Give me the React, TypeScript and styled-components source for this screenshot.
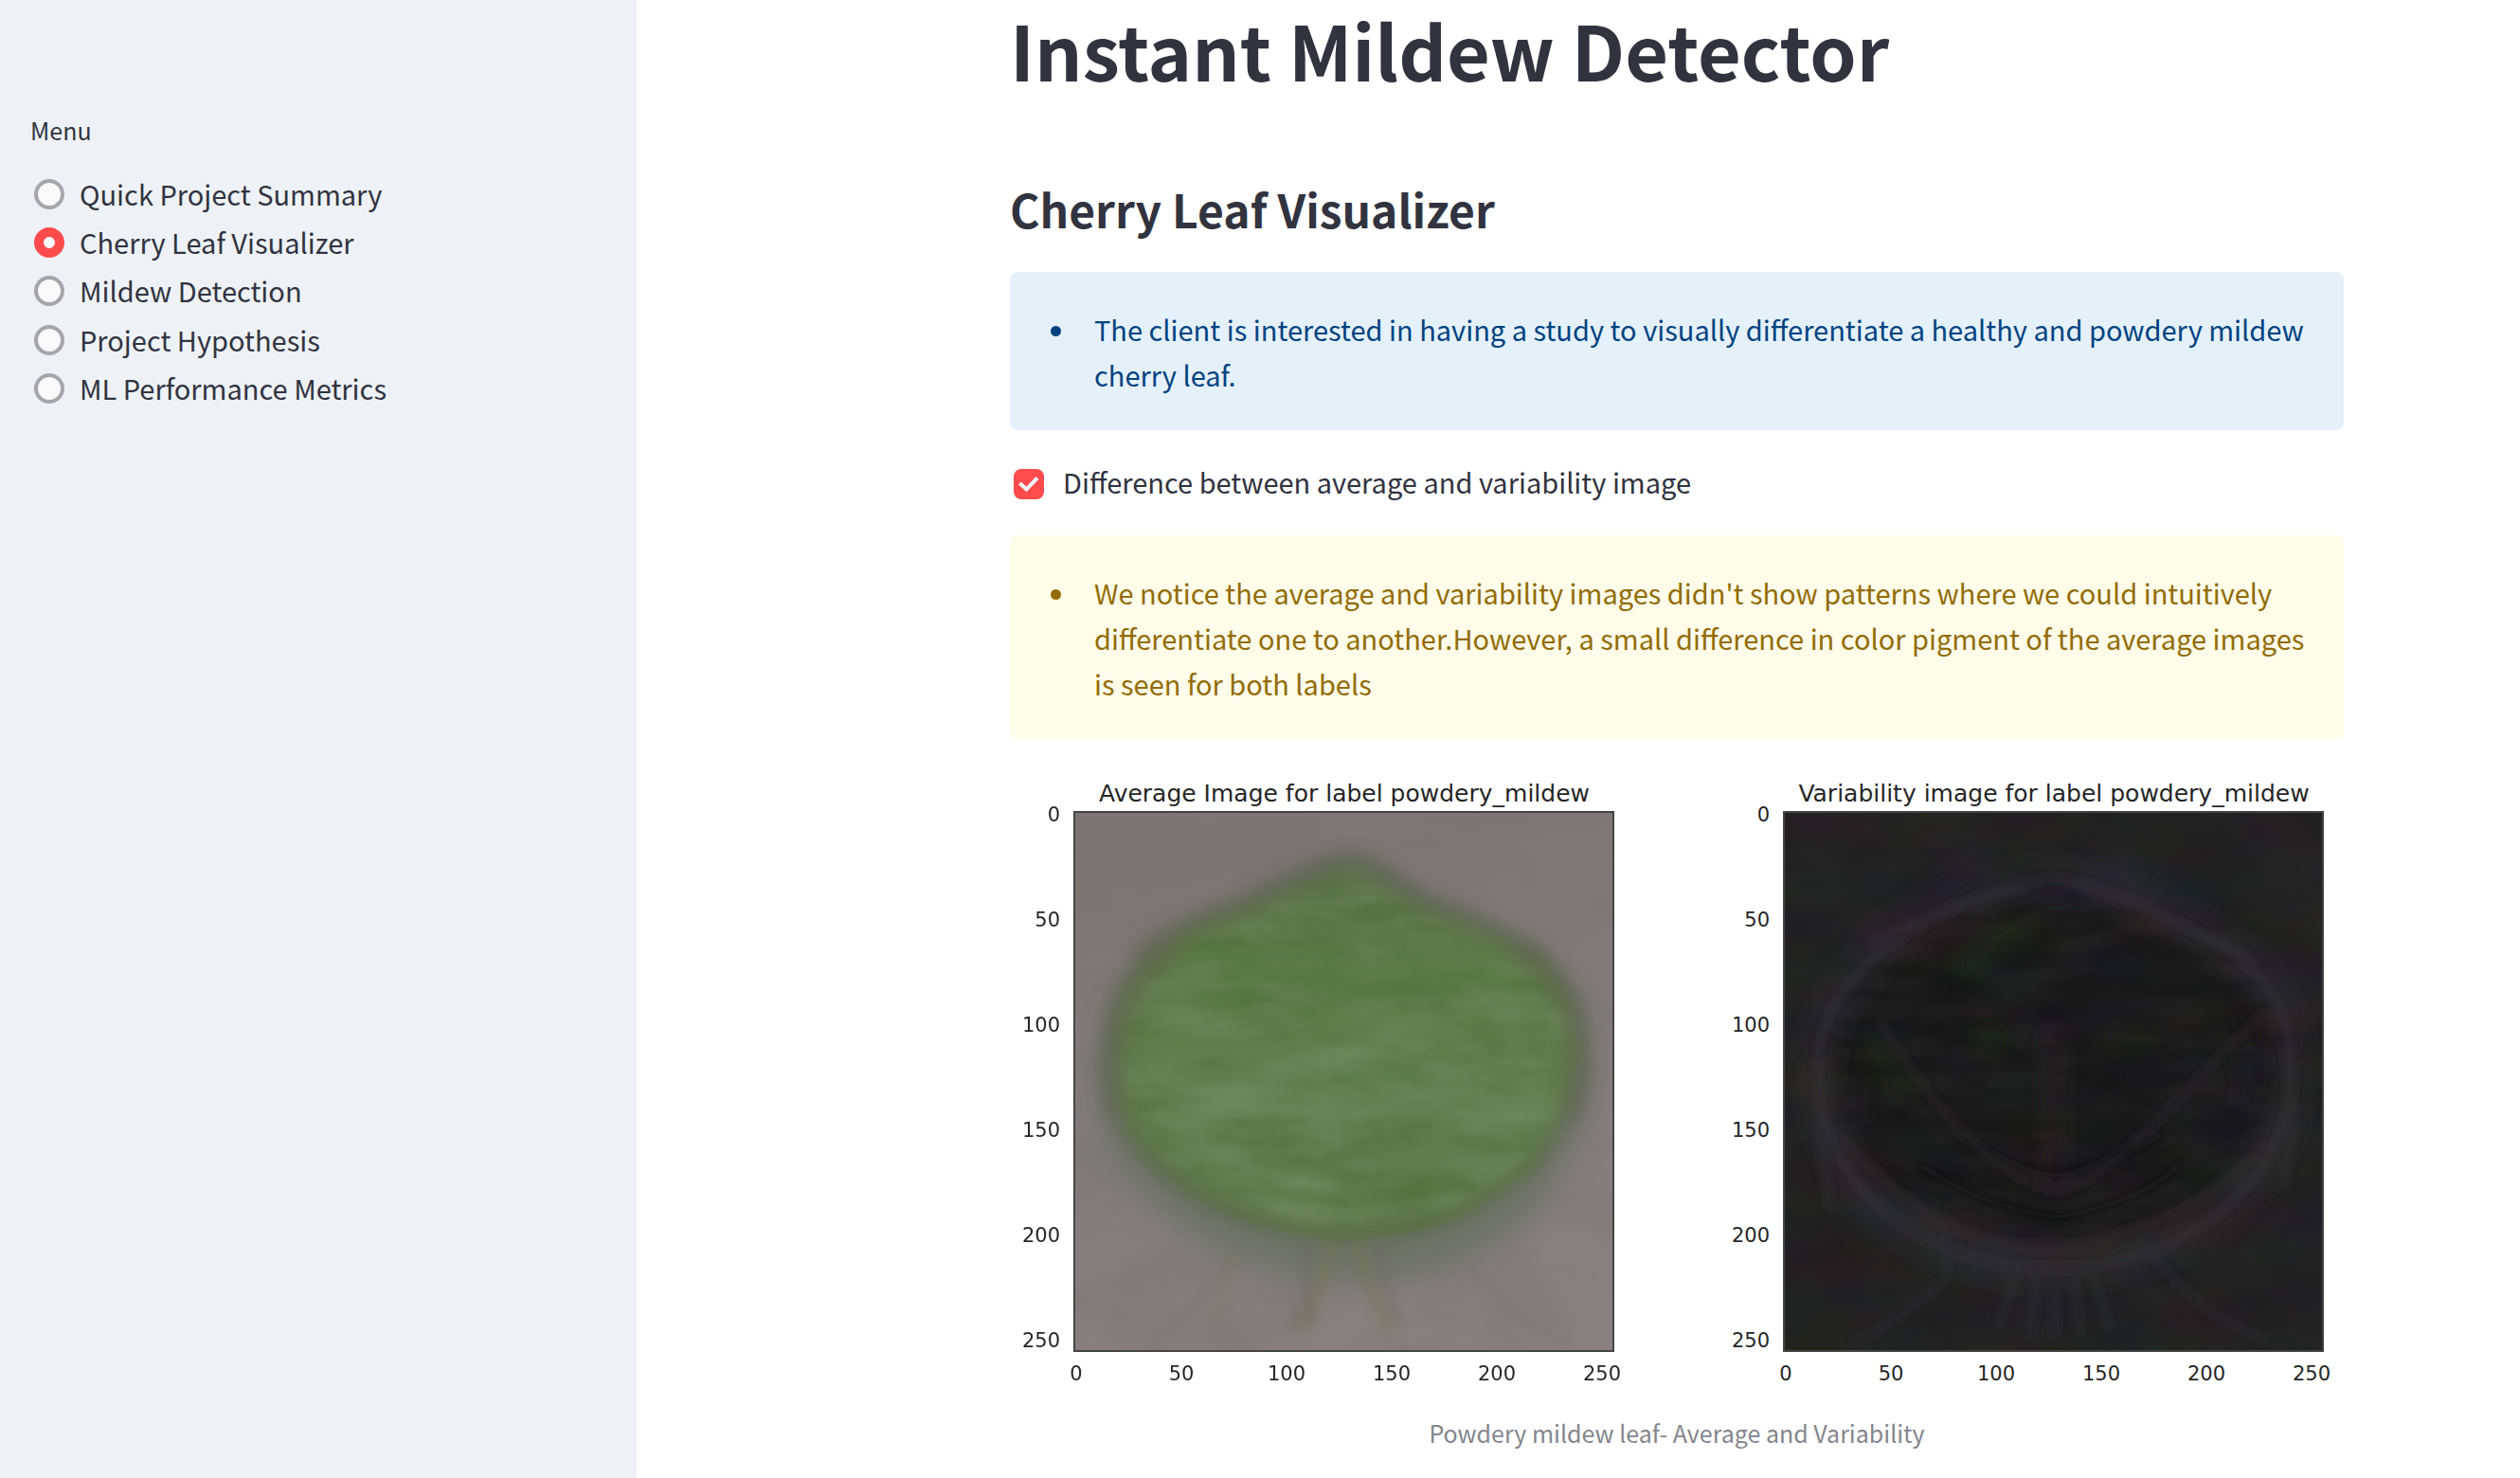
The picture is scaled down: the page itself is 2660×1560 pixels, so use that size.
import React, { useState } from "react";
import styled, { createGlobalStyle } from "styled-components";

const GlobalStyle = createGlobalStyle`
  *, *::before, *::after { box-sizing: border-box; }
  body {
    margin: 0;
    background: #ffffff;
    color: #31333f;
    font-family: "Noto Sans CJK JP", "Noto Sans CJK SC", "Noto Sans", sans-serif;
    font-size: 29px;
    line-height: 48px;
  }
`;

const Page = styled.div`
  display: flex;
  min-height: 100vh;
`;

const Sidebar = styled.aside`
  flex: 0 0 672px;
  padding: 117px 32px 32px;
  background: #eef2f7;
`;

const MenuGroup = styled.fieldset`
  margin: 0;
  padding: 0;
  border: 0;
`;

const MenuTitle = styled.legend`
  margin-bottom: 23px;
  padding: 0;
  font-size: 25px;
  line-height: 40px;
`;

const Options = styled.div`
  display: grid;
  grid-template-rows: repeat(5, 1fr);
  height: 256px;
`;

const Option = styled.label`
  display: flex;
  align-items: flex-start;
  gap: 16px;
  padding-left: 4px;
  cursor: pointer;
`;

const Radio = styled.input`
  flex: none;
  appearance: none;
  width: 32px;
  height: 32px;
  margin: 9px 0 0;
  border: 4px solid #a4a6ac;
  border-radius: 50%;
  background: #f9f9fb;

  &:checked {
    border: 10px solid #ff4b4b;
    background: #ffffff;
  }
`;

const Main = styled.main`
  flex: 1;
  min-width: 0;
  padding: 0 186px 0 394px;
`;

const Title = styled.h1`
  margin: 0 0 82px;
  font-size: 79px;
  font-weight: 700;
  line-height: 104px;
`;

const Subtitle = styled.h2`
  margin: 0 0 33px;
  font-size: 48px;
  font-weight: 600;
  line-height: 68px;
`;

const Alert = styled.div<{ $tone: "info" | "warning" }>`
  padding: 36px 32px 35px;
  border-radius: 8px;
  background: ${(p) => (p.$tone === "info" ? "#e4f1fb" : "#fffce9")};
  color: ${(p) => (p.$tone === "info" ? "#004280" : "#926c05")};
`;

const BulletList = styled.ul`
  margin: 0;
  padding: 0 0 0 40px;
`;

const Bullet = styled.li`
  padding-left: 17px;
`;

const CheckRow = styled.label`
  display: flex;
  align-items: flex-start;
  gap: 20px;
  height: 48px;
  margin: 31px 0 32px;
  padding-left: 4px;
  line-height: 46px;
  cursor: pointer;
`;

const CheckCell = styled.span`
  display: grid;
  flex: none;
  width: 32px;
  height: 32px;
  margin-top: 10px;
`;

const Checkbox = styled.input`
  grid-area: 1 / 1;
  appearance: none;
  width: 32px;
  height: 32px;
  margin: 0;
  border: 4px solid #a4a6ac;
  border-radius: 8px;
  background: #ffffff;

  &:checked {
    border-color: #ff4b4b;
    background: #ff4b4b;
  }
`;

const CheckMark = styled.svg`
  grid-area: 1 / 1;
  width: 32px;
  height: 32px;
  pointer-events: none;
`;

const Figure = styled.figure`
  margin: 32px 0 0;
`;

const Plots = styled.svg`
  display: block;
  width: 100%;
  height: auto;
  font-family: "DejaVu Sans", sans-serif;
  fill: #262626;
`;

const Caption = styled.figcaption`
  margin-top: 20px;
  color: #83858c;
  font-size: 25px;
  line-height: 40px;
  text-align: center;
`;

const PAGES = [
  "Quick Project Summary",
  "Cherry Leaf Visualizer",
  "Mildew Detection",
  "Project Hypothesis",
  "ML Performance Metrics",
];

const TICKS = [0, 50, 100, 150, 200, 250];
const SIZE = 570;

const LEAF =
  "M288 52C318 50 340 80 373 97C405 108 435 122 462 136C482 146 496 152 504 164C524 186 532 206 535 226C544 270 532 312 512 338C500 368 480 388 455 402C430 420 410 434 385 440C350 452 320 454 284 454C240 454 210 446 176 432C148 424 125 410 105 395C80 376 60 355 51 337C36 310 32 290 33 270C32 230 42 200 56 178C68 158 84 142 105 131C135 110 165 106 194 90C225 78 255 58 288 52Z";

const OUTLINE =
  "M284 70C330 74 380 100 440 130C500 160 534 200 536 270C536 350 490 410 420 450C370 474 330 482 284 482C230 482 180 470 130 440C70 400 34 340 36 262C40 200 90 150 150 118C200 92 240 74 284 70Z";

function Axes({ x, title, children }: { x: number; title: string; children: React.ReactNode }) {
  const step = 111;
  return (
    <g transform={`translate(${x} 45)`}>
      <text x={SIZE / 2} y={-11} fontSize="25" textAnchor="middle">
        {title}
      </text>
      <svg width={SIZE} height={SIZE} viewBox={`0 0 ${SIZE} ${SIZE}`}>
        {children}
      </svg>
      <rect x="0" y="0" width={SIZE - 1} height={SIZE - 1} fill="none" stroke="#444444" strokeWidth="2" />
      {TICKS.map((t, i) => (
        <React.Fragment key={t}>
          <text x={-15} y={10 + i * step} fontSize="21" textAnchor="end">
            {t}
          </text>
          <text x={2 + i * step} y={600} fontSize="21" textAnchor="middle">
            {t}
          </text>
        </React.Fragment>
      ))}
    </g>
  );
}

function AverageLeaf() {
  return (
    <>
      <rect width={SIZE} height={SIZE} fill="url(#wall)" />
      <rect width={SIZE} height={SIZE} filter="url(#cloud)" opacity="0.3" />
      <path d={LEAF} transform="translate(-8 2) scale(1.03 1.1)" fill="#6b7363" opacity="0.65" filter="url(#blur16)" />
      <path d={LEAF} fill="#5f6650" opacity="0.6" stroke="#5c6352" strokeWidth="8" filter="url(#blur10)" />
      <path d={LEAF} transform="translate(9 6) scale(0.97)" fill="url(#leafFill)" filter="url(#blur10)" />
      <g mask="url(#leafMask)">
        <rect width={SIZE} height={SIZE} filter="url(#grainDark)" opacity="0.8" />
        <rect width={SIZE} height={SIZE} filter="url(#grainLight)" opacity="0.75" />
      </g>
      <g fill="none" filter="url(#blur10)">
        <path d="M45 320C28 240 60 170 110 140M525 320C545 230 520 180 465 146" stroke="#5f5d4d" strokeWidth="18" opacity="0.5" />
        <path d="M60 150C110 120 150 110 196 92M372 94C420 115 450 128 500 158" stroke="#5e6450" strokeWidth="18" opacity="0.5" />
        <path d="M196 88C240 68 260 56 288 54C330 58 345 82 372 97" stroke="#5c6352" strokeWidth="18" opacity="0.55" />
        <path d="M100 390C180 490 390 500 480 400" stroke="#6a7361" strokeWidth="24" opacity="0.5" />
        <path d="M150 310C200 300 240 270 280 262C310 290 370 300 430 290" stroke="#728f66" strokeWidth="24" opacity="0.3" />
        <path d="M120 155C200 185 380 185 460 155" stroke="#53783c" strokeWidth="40" opacity="0.4" />
      </g>
      <g fill="none" filter="url(#blur4)">
        <path d="M60 330C110 420 200 440 288 446C370 442 430 420 490 360" stroke="#4f6b36" strokeWidth="8" opacity="0.4" />
        <path d="M230 108C270 118 300 118 340 104" stroke="#4d6e3e" strokeWidth="6" opacity="0.4" />
        <path d="M205 398C260 415 320 412 380 398" stroke="#4f7038" strokeWidth="10" opacity="0.4" />
        <path d="M205 385C260 396 320 396 350 388" stroke="#7b946c" strokeWidth="5" opacity="0.4" />
        <path d="M284 300V450" stroke="#55703e" strokeWidth="7" opacity="0.25" />
        <path d="M272 455C266 485 256 515 238 548M298 455C306 485 318 515 332 548" stroke="#73703f" strokeWidth="14" opacity="0.3" />
        <path d="M244 455L250 540M246 500L228 545M322 455C325 500 335 520 345 542" stroke="#625f58" strokeWidth="9" opacity="0.25" />
        <path d="M165 470C150 500 120 530 80 560M420 480C450 520 480 545 520 560" stroke="#756e66" strokeWidth="5" opacity="0.4" />
        <path d="M168 465C165 500 150 530 145 535" stroke="#7a7852" strokeWidth="10" opacity="0.25" />
      </g>
    </>
  );
}

function VariabilityLeaf() {
  return (
    <>
      <rect width={SIZE} height={SIZE} fill="#222322" />
      <path d={OUTLINE} fill="#1c1c1d" filter="url(#blur10)" />
      <g fill="none" filter="url(#blur10)">
        <path d={OUTLINE} stroke="#2f2b32" strokeWidth="36" opacity="0.85" />
        <path d="M200 60C240 90 320 90 370 60M330 70C400 100 470 120 510 180M80 140C120 110 170 90 200 50" stroke="#2e2437" strokeWidth="26" opacity="0.7" />
        <path d="M130 420C200 480 370 490 450 430" stroke="#32292f" strokeWidth="34" opacity="0.7" />
        <path d="M34 260C40 360 70 400 110 430M536 260C530 330 500 380 470 410" stroke="#2e2932" strokeWidth="32" opacity="0.7" />
        <path d="M286 230V400" stroke="#2b2127" strokeWidth="26" opacity="0.75" />
        <path d="M180 170C220 140 240 120 262 132M90 250C110 270 120 280 140 300M200 235L230 250M340 240L390 232" stroke="#1f2c16" strokeWidth="26" opacity="0.7" />
        <path d="M70 290V330M490 250V310" stroke="#211a2b" strokeWidth="26" opacity="0.8" />
        <path d="M250 88C280 74 300 74 320 92" stroke="#20162a" strokeWidth="22" opacity="0.7" />
      </g>
      <rect width={SIZE} height={SIZE} filter="url(#grainTint)" opacity="0.25" />
      <g mask="url(#leafMask)">
        <rect width={SIZE} height={SIZE} filter="url(#grainShade)" opacity="0.55" />
      </g>
      <g fill="none" filter="url(#blur4)">
        <path d={OUTLINE} stroke="#352f39" strokeWidth="7" opacity="0.45" />
        <path d="M90 140C160 100 210 92 284 72C370 92 440 125 500 160" stroke="#322e37" strokeWidth="6" opacity="0.6" />
        <path d="M100 220C170 330 230 390 290 400C360 380 430 280 510 210" stroke="#2b272e" strokeWidth="9" opacity="0.45" />
        <path d="M60 340C130 430 210 460 285 460C370 455 470 400 510 350" stroke="#352a32" strokeWidth="8" opacity="0.55" />
        <path d="M40 260C36 330 40 380 50 420M530 250C538 310 536 360 526 400" stroke="#2f2f30" strokeWidth="9" opacity="0.6" />
        <path d="M140 370C200 410 240 420 290 428C350 415 390 400 420 370" stroke="#121413" strokeWidth="6" opacity="0.5" />
        <path d="M180 340C230 370 260 380 290 384C330 375 380 350 400 340" stroke="#131514" strokeWidth="6" opacity="0.5" />
        <path d="M172 440V490C140 520 110 545 70 560M375 455C410 490 450 540 510 556" stroke="#2b2a33" strokeWidth="6" opacity="0.8" />
        <path d="M248 480L225 545M268 485L260 555M286 485V555M305 485L312 555M322 480L345 545" stroke="#2a2b31" strokeWidth="8" opacity="0.6" />
      </g>
    </>
  );
}

function LeafPlots() {
  return (
    <Plots viewBox="0 0 1408 660" role="img" aria-label="Powdery mildew leaf plots">
      <defs>
        <linearGradient id="wall" x1="0.4" y1="0" x2="0.6" y2="1">
          <stop offset="0" stopColor="#7f7573" />
          <stop offset="0.45" stopColor="#837c7b" />
          <stop offset="1" stopColor="#897f7e" />
        </linearGradient>
        <linearGradient id="leafFill" x1="0" y1="0" x2="0" y2="1">
          <stop offset="0" stopColor="#5e7549" />
          <stop offset="0.25" stopColor="#5a7a45" />
          <stop offset="0.6" stopColor="#62804f" />
          <stop offset="1" stopColor="#5d784a" />
        </linearGradient>
        <mask id="leafMask" maskUnits="userSpaceOnUse" x="0" y="0" width={SIZE} height={SIZE}>
          <path d={LEAF} transform="translate(14 10) scale(0.95)" fill="#ffffff" filter="url(#blur10)" />
        </mask>
        <filter id="blur4" x="-20%" y="-20%" width="140%" height="140%">
          <feGaussianBlur stdDeviation="4" />
        </filter>
        <filter id="blur10" x="-20%" y="-20%" width="140%" height="140%">
          <feGaussianBlur stdDeviation="10" />
        </filter>
        <filter id="blur16" x="-20%" y="-20%" width="140%" height="140%">
          <feGaussianBlur stdDeviation="14" />
        </filter>
        <filter id="cloud" x="0" y="0" width="100%" height="100%" colorInterpolationFilters="sRGB">
          <feTurbulence type="fractalNoise" baseFrequency="0.008 0.012" numOctaves={3} seed={8} />
          <feColorMatrix values="0 0 0 0 0.43  0 0 0 0 0.43  0 0 0 0 0.39  1.6 0 0 0 -0.6" />
        </filter>
        <filter id="grainDark" x="0" y="0" width="100%" height="100%" colorInterpolationFilters="sRGB">
          <feTurbulence type="fractalNoise" baseFrequency="0.012 0.034" numOctaves={4} seed={3} />
          <feColorMatrix values="0 0 0 0 0.28  0 0 0 0 0.42  0 0 0 0 0.2  1.3 0 0 0 -0.5" />
          <feGaussianBlur stdDeviation="1" />
        </filter>
        <filter id="grainLight" x="0" y="0" width="100%" height="100%" colorInterpolationFilters="sRGB">
          <feTurbulence type="fractalNoise" baseFrequency="0.01 0.03" numOctaves={4} seed={14} />
          <feColorMatrix values="0 0 0 0 0.48  0 0 0 0 0.57  0 0 0 0 0.42  1.4 0 0 0 -0.52" />
          <feGaussianBlur stdDeviation="1" />
        </filter>
        <filter id="grainTint" x="0" y="0" width="100%" height="100%" colorInterpolationFilters="sRGB">
          <feTurbulence type="fractalNoise" baseFrequency="0.01 0.02" numOctaves={3} seed={5} />
          <feColorMatrix values="0.27 0 0 0 0  0 0.25 0 0 0  0 0 0.28 0 0  0 0 0 0 1" />
        </filter>
        <filter id="grainShade" x="0" y="0" width="100%" height="100%" colorInterpolationFilters="sRGB">
          <feTurbulence type="fractalNoise" baseFrequency="0.014 0.05" numOctaves={3} seed={9} />
          <feColorMatrix values="0 0 0 0 0.06  0 0 0 0 0.07  0 0 0 0 0.07  2 0 0 0 -0.8" />
          <feGaussianBlur stdDeviation="1" />
        </filter>
      </defs>
      <Axes x={68} title="Average Image for label powdery_mildew">
        <AverageLeaf />
      </Axes>
      <Axes x={817} title="Variability image for label powdery_mildew">
        <VariabilityLeaf />
      </Axes>
    </Plots>
  );
}

export default function App() {
  const [page, setPage] = useState(PAGES[1]);
  const [showDifference, setShowDifference] = useState(true);

  return (
    <>
      <GlobalStyle />
      <Page>
        <Sidebar>
          <MenuGroup>
            <MenuTitle>Menu</MenuTitle>
            <Options>
              {PAGES.map((name) => (
                <Option key={name}>
                  <Radio type="radio" name="page" checked={page === name} onChange={() => setPage(name)} />
                  {name}
                </Option>
              ))}
            </Options>
          </MenuGroup>
        </Sidebar>
        <Main>
          <Title>Instant Mildew Detector</Title>
          <Subtitle>Cherry Leaf Visualizer</Subtitle>
          <Alert $tone="info">
            <BulletList>
              <Bullet>
                The client is interested in having a study to visually differentiate a healthy and powdery mildew
                cherry leaf.
              </Bullet>
            </BulletList>
          </Alert>
          <CheckRow>
            <CheckCell>
              <Checkbox
                type="checkbox"
                checked={showDifference}
                onChange={(e) => setShowDifference(e.target.checked)}
              />
              {showDifference && (
                <CheckMark viewBox="0 0 32 32" aria-hidden="true">
                  <path d="M6.5 15L13.5 21.5L25 9.5" fill="none" stroke="#f0f2f6" strokeWidth="4" />
                </CheckMark>
              )}
            </CheckCell>
            Difference between average and variability image
          </CheckRow>
          {showDifference && (
            <>
              <Alert $tone="warning">
                <BulletList>
                  <Bullet>
                    We notice the average and variability images didn't show patterns where we could intuitively
                    differentiate one to another.However, a small difference in color pigment of the average images
                    is seen for both labels
                  </Bullet>
                </BulletList>
              </Alert>
              <Figure>
                <LeafPlots />
                <Caption>Powdery mildew leaf- Average and Variability</Caption>
              </Figure>
            </>
          )}
        </Main>
      </Page>
    </>
  );
}
